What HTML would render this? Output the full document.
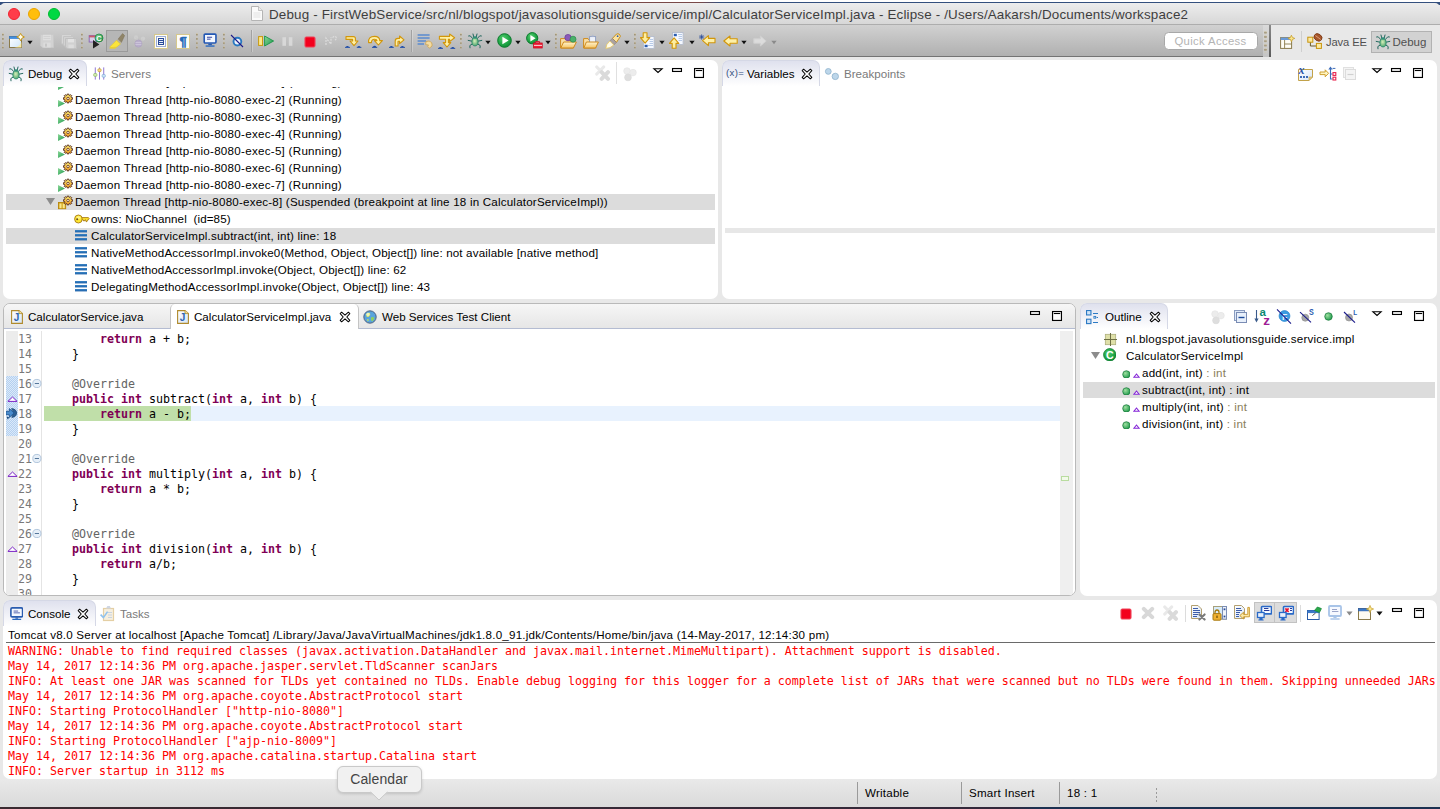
<!DOCTYPE html>
<html>
<head>
<meta charset="utf-8">
<title>Debug - Eclipse</title>
<style>
*{box-sizing:border-box;margin:0;padding:0}
html,body{width:1440px;height:809px;overflow:hidden}
body{background:#e8e8e8;font-family:"Liberation Sans",sans-serif;font-size:11px;color:#000;position:relative}
.abs{position:absolute}
#titlebar{left:0;top:3px;width:1440px;height:22px;background:linear-gradient(#ededed,#d7d7d7);border-bottom:1px solid #adadad;border-radius:5px 5px 0 0}
#title{left:269px;top:7px;font-size:13.4px;letter-spacing:0.165px;line-height:16px;color:#3e3e3e;white-space:nowrap}
.tl{width:12px;height:12px;border-radius:50%;top:8px}
#toolbar{left:0;top:25px;width:1262.5px;height:32px;background:linear-gradient(#d1d1d1,#b0b0b0);border-bottom:1px solid #737373}
#persp{left:1270px;top:25px;width:170px;height:32px;background:#e8e8e8}
.panel{background:#fff;border-radius:7px}
.tabtxt{top:0;height:26px;line-height:27px;white-space:nowrap;font-size:11.6px;letter-spacing:0}
.atab{background:linear-gradient(#dfe1ee,#fff);border:1px solid #d5d8e6;border-bottom:none;border-radius:7px 7px 0 0;height:26px;top:0}
.gray{color:#7a7a7a}
.row{left:0;height:17px;line-height:15px;white-space:nowrap;font-size:11.6px;letter-spacing:0.22px}
.mono{font-family:"DejaVu Sans Mono","Liberation Mono",monospace;font-size:11.63px;white-space:pre}
.cl{left:0;height:15px;line-height:15px}
.kw{color:#7f0055;font-weight:bold}
.an{color:#646464}
.ln{color:#787878}
.red{color:#ff0000}
</style>
</head>
<body>
<svg width="0" height="0" style="position:absolute"><defs>
<radialGradient id="gBug" cx="0.45" cy="0.4" r="0.7"><stop offset="0" stop-color="#d6efb8"/><stop offset="1" stop-color="#3a9a66"/></radialGradient>
<linearGradient id="gGear" x1="0" y1="0" x2="0" y2="1"><stop offset="0" stop-color="#fdf27a"/><stop offset="1" stop-color="#f59a1c"/></linearGradient>
<linearGradient id="gYel" x1="0" y1="0" x2="0" y2="1"><stop offset="0" stop-color="#fff3a0"/><stop offset="1" stop-color="#e9a820"/></linearGradient>
<linearGradient id="gBlue" x1="0" y1="0" x2="0" y2="1"><stop offset="0" stop-color="#3d86c6"/><stop offset="1" stop-color="#1a5fa8"/></linearGradient>
<linearGradient id="gGreen" x1="0" y1="0" x2="1" y2="1"><stop offset="0" stop-color="#8fd99a"/><stop offset="1" stop-color="#18964a"/></linearGradient>
<radialGradient id="gDot" cx="0.35" cy="0.35" r="0.7"><stop offset="0" stop-color="#9fe0a0"/><stop offset="1" stop-color="#1f9a4c"/></radialGradient>
<linearGradient id="gPage" x1="0" y1="0" x2="1" y2="1"><stop offset="0" stop-color="#ffffff"/><stop offset="1" stop-color="#d5e4f7"/></linearGradient>
<linearGradient id="gFolder" x1="0" y1="0" x2="0" y2="1"><stop offset="0" stop-color="#fff4d0"/><stop offset="1" stop-color="#f5c463"/></linearGradient>
<linearGradient id="gWin" x1="0" y1="0" x2="1" y2="1"><stop offset="0" stop-color="#ffffff"/><stop offset="1" stop-color="#cfe6fa"/></linearGradient>
<radialGradient id="gRun" cx="0.4" cy="0.35" r="0.75"><stop offset="0" stop-color="#52cc6c"/><stop offset="0.6" stop-color="#1fa546"/><stop offset="1" stop-color="#0a8430"/></radialGradient>
<linearGradient id="gRed" x1="0" y1="0" x2="0" y2="1"><stop offset="0" stop-color="#ff4a5a"/><stop offset="1" stop-color="#e8001c"/></linearGradient>
</defs></svg>
<!-- TITLE BAR -->
<div class="abs" style="left:0;top:0;width:1440px;height:5px;background:linear-gradient(#fff 0 1.7px,transparent 1.7px),linear-gradient(90deg,#34507e 0,#34507e 420px,#7a4a48 430px,#7a4a48 700px,#34507e 720px)"></div>
<div id="titlebar" class="abs"></div>
<div class="abs tl" style="left:8px;background:#ff3d49;border:1px solid #f2232f"></div>
<div class="abs tl" style="left:28px;background:#ffbe0b;border:1px solid #eaa400"></div>
<div class="abs tl" style="left:48px;background:#00d843;border:1px solid #00bb30"></div>
<div id="title" class="abs">Debug - FirstWebService/src/nl/blogspot/javasolutionsguide/service/impl/CalculatorServiceImpl.java - Eclipse - /Users/Aakarsh/Documents/workspace2</div>
<!-- TOOLBAR -->
<div id="toolbar" class="abs"></div>
<div id="persp" class="abs"></div>
<svg class="abs" style="left:251px;top:6px" width="12" height="15" viewBox="0 0 12 15"><path d="M0.5 0.5 H7.5 L11.5 4.5 V14.5 H0.5 Z" fill="#fafafa" stroke="#b4b4b4" stroke-width="1"/><path d="M7.5 0.5 V4.5 H11.5" fill="#ececec" stroke="#b4b4b4" stroke-width="0.8"/><path d="M2.4 7 H9.4 M2.4 9 H9.4 M2.4 11 H9.4" stroke="#dcdcdc" stroke-width="0.8"/></svg>
<div class="abs" style="left:2px;top:33.2px;width:2.4px;height:17.2px;background:radial-gradient(circle at 1.1px 1.6px,#9c9178 0.6px,rgba(214,204,176,0.85) 1.3px,transparent 1.6px);background-size:2.4px 4.3px"></div>
<svg class="abs" style="left:8px;top:33px" width="17" height="16" viewBox="0 0 17 16"><rect x="1.5" y="3.5" width="12" height="11" fill="url(#gWin)" stroke="#8a7a4a" stroke-width="1"/><path d="M13.4 9 Q12 14 6 14.4 H13.4 Z" fill="#fbeaa0" opacity="0.9"/><rect x="1.5" y="3.5" width="12" height="2.2" fill="#3f8fe4" stroke="#2f76cc" stroke-width="0.5"/><path d="M12.6 0.4 L13.9 2.7 L16.4 4 L13.9 5.3 L12.6 7.8 L11.3 5.3 L8.8 4 L11.3 2.7 Z" fill="#fffbe6" stroke="#c8981c" stroke-width="1"/></svg>
<svg class="abs" style="left:27px;top:39.7px" width="6" height="5" viewBox="0 0 7 5"><path d="M0.4 0.6 H6.6 L3.5 4.4 Z" fill="#111"/></svg>
<svg class="abs" style="left:40px;top:34px" width="14" height="14" viewBox="0 0 14 14"><path d="M0.5 0.5 H13.5 V13.5 H2.5 L0.5 11.5 Z" fill="#d2d2d2" stroke="#c9c9c9" stroke-width="1"/><rect x="3" y="0.8" width="8" height="5.4" fill="#dedede"/><path d="M3.6 2.5 H10.4 M3.6 4.5 H10.4" stroke="#cfcfcf" stroke-width="0.8"/><rect x="3.4" y="8.6" width="7.2" height="4.9" fill="#dcdcdc"/><rect x="5" y="9.6" width="2" height="3" fill="#c6c6c6"/></svg>
<svg class="abs" style="left:61px;top:34px" width="16" height="15" viewBox="0 0 16 15"><path d="M0.5 0.5 H10.5 V10.5 H2 L0.5 9 Z" fill="#d6d6d6" stroke="#c6c6c6" stroke-width="1"/><path d="M2.5 2.5 H12.5 V12.5 H4 L2.5 11 Z" fill="#d2d2d2" stroke="#c4c4c4" stroke-width="1"/><path d="M4.5 4.5 H15.5 V14.5 H6 L4.5 13 Z" fill="#d0d0d0" stroke="#c0c0c0" stroke-width="1"/><rect x="7" y="5" width="6" height="3.4" fill="#e2e2e2"/><rect x="7.4" y="10.6" width="5.4" height="3.6" fill="#dcdcdc"/></svg>
<div class="abs" style="left:81px;top:33.2px;width:2.4px;height:17.2px;background:radial-gradient(circle at 1.1px 1.6px,#9c9178 0.6px,rgba(214,204,176,0.85) 1.3px,transparent 1.6px);background-size:2.4px 4.3px"></div>
<svg class="abs" style="left:88px;top:33px" width="16" height="16" viewBox="0 0 16 16"><rect x="1.2" y="2.6" width="7" height="6.4" fill="#d8cde8" stroke="#8a6ab4" stroke-width="1"/><rect x="1.2" y="2.6" width="7" height="1.8" fill="#c85a6a"/><path d="M5 7 L11.4 11.4 L5 15.6 Z" fill="#222"/><circle cx="11" cy="5" r="4" fill="url(#gGreen)" stroke="#147a3a" stroke-width="0.7"/><text x="11" y="7.6" text-anchor="middle" font-family="Liberation Sans, sans-serif" font-weight="bold" font-size="7.4" fill="#fff">C</text></svg>
<div class="abs" style="left:106px;top:30px;width:22px;height:22px;background:#b6b6b6;border:1px solid #9a9a9a"></div>
<svg class="abs" style="left:109px;top:33px" width="16" height="16" viewBox="0 0 16 16"><path d="M9 6.2 L13.6 0.6 L15.6 2.6 L12.4 9.4 Z" fill="#8f8468" stroke="#7a6e52" stroke-width="0.5"/><path d="M7.4 7.4 L9 6.2 L12.4 9.4 L11.4 11 Z" fill="#b8b09a"/><path d="M7.4 7.4 L11.4 11 L7.4 14.2 L1.6 14.6 L1.2 13.6 Z" fill="#fbe43c" stroke="#e8cc1e" stroke-width="0.6"/><path d="M0.6 15 H6.6" stroke="#f2d420" stroke-width="1.2"/></svg>
<svg class="abs" style="left:132px;top:33px" width="15" height="16" viewBox="0 0 15 16"><circle cx="4" cy="4.4" r="2.1" fill="#cecece"/><circle cx="11" cy="5.6" r="2.1" fill="#cecece"/><path d="M4 4.4 L7 9 L11 5.6" fill="none" stroke="#cacaca" stroke-width="1"/><ellipse cx="6.4" cy="10.6" rx="3.5" ry="3.6" fill="#b9aecb" stroke="#ada2bf" stroke-width="0.7"/><path d="M3.4 9.5 H9.4 M3.4 11.5 H9.4" stroke="#cfc8dc" stroke-width="0.8"/></svg>
<svg class="abs" style="left:154px;top:34px" width="14" height="15" viewBox="0 0 14 15"><rect x="0.5" y="0.5" width="13" height="14" fill="#fdfdf8" stroke="#d6c88c" stroke-width="1"/><rect x="2.5" y="2.5" width="9" height="10" fill="none" stroke="#3a5ab0" stroke-width="1" stroke-dasharray="1 1"/><rect x="4.5" y="4.5" width="5" height="6" fill="#e8eefa" stroke="#2a4c9a" stroke-width="1"/><path d="M5 6.5 H9 M5 8.5 H9" stroke="#2a4c9a" stroke-width="1"/></svg>
<svg class="abs" style="left:176px;top:34px" width="14" height="15" viewBox="0 0 14 15"><rect x="0.5" y="0.5" width="13" height="14" fill="#fdfdf8" stroke="#d6c88c" stroke-width="1"/><text x="7" y="12" text-anchor="middle" font-family="Liberation Sans, sans-serif" font-weight="bold" font-size="13" fill="#246ab8" stroke="#246ab8" stroke-width="0.5">¶</text></svg>
<div class="abs" style="left:196px;top:33.2px;width:2.4px;height:17.2px;background:radial-gradient(circle at 1.1px 1.6px,#9c9178 0.6px,rgba(214,204,176,0.85) 1.3px,transparent 1.6px);background-size:2.4px 4.3px"></div>
<svg class="abs" style="left:203.4px;top:33.2px" width="14.2" height="14.2" viewBox="0 0 15 15"><rect x="1.3" y="1.2" width="12.4" height="9.4" rx="1" fill="#f4f8ff" stroke="#2458b4" stroke-width="1.7"/><path d="M4.2 4.5 H9.6 M4.2 6.5 H8" stroke="#2a3c9a" stroke-width="1"/><path d="M5.6 11.2 H9.4 V12.8 H5.6 Z" fill="#2a5cb0"/><path d="M2.8 13.8 H12.2" stroke="#2a6ac0" stroke-width="1.5"/></svg>
<div class="abs" style="left:223px;top:33.2px;width:2.4px;height:17.2px;background:radial-gradient(circle at 1.1px 1.6px,#9c9178 0.6px,rgba(214,204,176,0.85) 1.3px,transparent 1.6px);background-size:2.4px 4.3px"></div>
<svg class="abs" style="left:230px;top:34px" width="14" height="14" viewBox="0 0 14 14"><circle cx="7.4" cy="7.6" r="3.9" fill="#eef3fa" stroke="#2a78c0" stroke-width="1.9"/><path d="M1 1 L13 13" stroke="#1a1a8a" stroke-width="1.1"/></svg>
<div class="abs" style="left:251px;top:30px;width:1px;height:22px;background:#a2a2a2;box-shadow:1px 0 0 rgba(255,255,255,0.25)"></div>
<svg class="abs" style="left:257.6px;top:35px" width="17" height="12" viewBox="0 0 17 12"><rect x="0.6" y="1.6" width="3.9" height="8.8" fill="#fde98a" stroke="#c89a10" stroke-width="1"/><path d="M6.6 1 L15.6 6 L6.6 11 Z" fill="url(#gGreen)" stroke="#1a9446" stroke-width="0.9" stroke-linejoin="round"/></svg>
<svg class="abs" style="left:282px;top:37px" width="11" height="9" viewBox="0 0 11 9"><rect x="0.4" y="0.2" width="3.6" height="8.6" fill="#d8d8d8"/><rect x="6.8" y="0.2" width="3.6" height="8.6" fill="#d8d8d8"/></svg>
<svg class="abs" style="left:303.5px;top:35.5px" width="12" height="12" viewBox="0 0 12 12"><rect x="1" y="1" width="10" height="10" rx="1.4" fill="#f3001d" stroke="#ee4358" stroke-width="1.1"/></svg>
<svg class="abs" style="left:324px;top:34px" width="14" height="14" viewBox="0 0 14 14"><path d="M2 11 L2 4 L7 10 L7 3 M8.6 3.6 Q10 1.6 12 3 Q13 5 11 6" fill="none" stroke="#dcdcdc" stroke-width="1.2" stroke-dasharray="2 1"/></svg>
<svg class="abs" style="left:345px;top:35px" width="17" height="13" viewBox="0 0 17 13"><path d="M1 1.6 H8.4 Q10.4 1.6 10.4 3.6 V6 H13 L9 10.6 L5 6 H7.6 V4.4 H1 Z" fill="#fdf0a6" stroke="#d2960a" stroke-width="1.1" stroke-linejoin="round"/><path d="M0.6 12.2 Q2.4 9.6 4.2 12.2 Z M12.2 12.2 Q14 9.6 15.8 12.2 Z" fill="#1c4ca8"/><path d="M0 12.4 H5 M11.8 12.4 H16.4" stroke="#1c4ca8" stroke-width="0.9"/></svg>
<svg class="abs" style="left:367px;top:35px" width="17" height="13" viewBox="0 0 17 13"><path d="M1.6 7.6 Q1 1.4 7.6 1.4 Q12.6 1.4 12.8 5.6 H15.4 L11.4 10 L7.4 5.6 H10 Q9.8 4.2 7.6 4.2 Q4.4 4.2 4.4 7.6 Z" fill="#fdf0a6" stroke="#d2960a" stroke-width="1.1" stroke-linejoin="round"/><path d="M5.6 12.2 Q7.6 9.4 9.6 12.2 Z" fill="#1c4ca8"/><path d="M5 12.4 H10.2" stroke="#1c4ca8" stroke-width="0.9"/></svg>
<svg class="abs" style="left:389px;top:35px" width="17" height="13" viewBox="0 0 17 13"><path d="M6.2 11 V6 Q6.2 3.4 9 3.4 H10.6 V1 L15 4.8 L10.6 8.6 V6.2 H9.4 Q9 6.2 9 6.8 V11 Z" fill="#fdf0a6" stroke="#d2960a" stroke-width="1.1" stroke-linejoin="round"/><path d="M0.6 12.2 Q2.4 9.6 4.2 12.2 Z M11.6 12.2 Q13.4 9.6 15.2 12.2 Z" fill="#1c4ca8"/><path d="M0 12.4 H4.8 M11 12.4 H16" stroke="#1c4ca8" stroke-width="0.9"/></svg>
<div class="abs" style="left:411px;top:30px;width:1px;height:22px;background:#a2a2a2;box-shadow:1px 0 0 rgba(255,255,255,0.25)"></div>
<svg class="abs" style="left:417px;top:33px" width="16" height="16" viewBox="0 0 16 16"><path d="M0.6 2 H12.6 M0.6 5 H12.6 M0.6 8 H9 M0.6 11 H7" stroke="#5a8ad0" stroke-width="1.6"/><path d="M9 8.6 L12 8 Q15.6 9 15 13 L12.6 15 L10.4 13.4 L11.6 12 L8.6 11.6 Z" fill="#f4dca0" stroke="#d0a85a" stroke-width="0.9" stroke-linejoin="round"/></svg>
<svg class="abs" style="left:438px;top:33px" width="18" height="16" viewBox="0 0 18 16"><path d="M1.4 3.4 H11.6 V1 L16.6 4.8 L11.6 8.6 V6.2 H10.4 V9.6 H12.8 L9 14 L5.2 9.6 H7.6 V6.2 H1.4 Z" fill="#fdf0a6" stroke="#d2960a" stroke-width="1.1" stroke-linejoin="round"/><path d="M0.6 15.2 Q2.4 12.6 4.2 15.2 Z M13 15.2 Q14.8 12.6 16.6 15.2 Z" fill="#1c4ca8"/><path d="M0 15.4 H5 M12.4 15.4 H17.2" stroke="#1c4ca8" stroke-width="0.9"/></svg>
<div class="abs" style="left:460px;top:33.2px;width:2.4px;height:17.2px;background:radial-gradient(circle at 1.1px 1.6px,#9c9178 0.6px,rgba(214,204,176,0.85) 1.3px,transparent 1.6px);background-size:2.4px 4.3px"></div>
<svg class="abs" style="left:467px;top:33px" width="16" height="16" viewBox="0 0 16 16"><g stroke="#1a6258" stroke-width="0.95" fill="none" stroke-linecap="round"><path d="M5.8 5.6 L3.2 2.8 L1.6 3 M10.2 5.6 L12.8 2.8 L14.4 3 M5 8.2 L1.2 7.4 M11 8.2 L14.8 7.4 M5.4 10.8 L2.8 12.6 L3 14.8 M10.6 10.8 L13.2 12.6 L13 14.8 M6.8 4.2 L6 1 M9.2 4.2 L10 1"/></g><ellipse cx="8" cy="8.8" rx="3.1" ry="4.1" fill="url(#gBug)" stroke="#2a8a6a" stroke-width="0.9"/><ellipse cx="8" cy="4.4" rx="1.7" ry="1.2" fill="#2f8f78"/></svg>
<svg class="abs" style="left:485px;top:39.7px" width="6" height="5" viewBox="0 0 7 5"><path d="M0.4 0.6 H6.6 L3.5 4.4 Z" fill="#111"/></svg>
<svg class="abs" style="left:497px;top:33px" width="15" height="15" viewBox="0 0 15 15"><circle cx="7.5" cy="7.5" r="6.8" fill="url(#gRun)" stroke="#0a7a2c" stroke-width="1"/><path d="M5.4 3.7 L11.6 7.5 L5.4 11.3 Z" fill="#fff"/></svg>
<svg class="abs" style="left:515px;top:39.7px" width="6" height="5" viewBox="0 0 7 5"><path d="M0.4 0.6 H6.6 L3.5 4.4 Z" fill="#111"/></svg>
<svg class="abs" style="left:526px;top:32px" width="17" height="17" viewBox="0 0 17 17"><circle cx="6.2" cy="6.2" r="5.6" fill="url(#gRun)" stroke="#0a7a2c" stroke-width="1"/><path d="M4.4 3 L9.6 6.2 L4.4 9.4 Z" fill="#fff"/><path d="M9.6 9.6 H13.6 V11 H9.6 Z" fill="#fff" stroke="#d0102a" stroke-width="1"/><rect x="7.6" y="11" width="8.6" height="5" fill="#ee2038" stroke="#c80a20" stroke-width="0.8"/><path d="M8 13.4 H16" stroke="#fff" stroke-width="0.8"/></svg>
<svg class="abs" style="left:545px;top:39.7px" width="6" height="5" viewBox="0 0 7 5"><path d="M0.4 0.6 H6.6 L3.5 4.4 Z" fill="#111"/></svg>
<div class="abs" style="left:555px;top:33.2px;width:2.4px;height:17.2px;background:radial-gradient(circle at 1.1px 1.6px,#9c9178 0.6px,rgba(214,204,176,0.85) 1.3px,transparent 1.6px);background-size:2.4px 4.3px"></div>
<svg class="abs" style="left:560px;top:34px" width="17" height="15" viewBox="0 0 17 15"><path d="M0.6 4.6 H5.6 L7 6.4 H13.4 V14 H0.6 Z" fill="#f8dfa8" stroke="#cf8a1c" stroke-width="1"/><path d="M0.8 14 L3.6 8 H16.4 L13.4 14 Z" fill="url(#gFolder)" stroke="#cf8a1c" stroke-width="1" stroke-linejoin="round"/><circle cx="8" cy="3.6" r="3.2" fill="#8a5ab8" stroke="#6a3a9a" stroke-width="0.7"/><circle cx="13" cy="5.2" r="3" fill="#4ab06a" stroke="#2a8a4a" stroke-width="0.7"/></svg>
<svg class="abs" style="left:583px;top:34px" width="16" height="15" viewBox="0 0 16 15"><path d="M0.6 4.6 H5 L6.4 6.4 H12.6 V14 H0.6 Z" fill="#f8dfa8" stroke="#cf8a1c" stroke-width="1"/><rect x="6.6" y="2.6" width="6" height="6" fill="#eef2fa" stroke="#8a9cc0" stroke-width="0.9"/><path d="M8.4 2.6 L9 0.8 H10.4 L11 2.6 Z" fill="#b4bcd0"/><path d="M0.8 14 L3.4 8 H15.4 L12.6 14 Z" fill="url(#gFolder)" stroke="#cf8a1c" stroke-width="1" stroke-linejoin="round"/></svg>
<svg class="abs" style="left:605px;top:33px" width="16" height="16" viewBox="0 0 16 16"><path d="M7.4 5.4 L11.6 1 Q14.6 0 15.4 3.4 L11.4 9.4 Z" fill="#fbe2a0" stroke="#c8901c" stroke-width="1" stroke-linejoin="round"/><circle cx="12.6" cy="3.2" r="0.9" fill="#2a5cb0"/><path d="M4.8 8 L7.4 5.4 L11.4 9.4 L8.8 12 Z" fill="#aaa2a2" stroke="#8a7e78" stroke-width="0.6"/><path d="M4.8 8 L8.8 12 L5 14.6 L0.8 15.4 L1.8 11.6 Z" fill="#fffbe8" stroke="#e8c860" stroke-width="0.8"/></svg>
<svg class="abs" style="left:624px;top:39.7px" width="6" height="5" viewBox="0 0 7 5"><path d="M0.4 0.6 H6.6 L3.5 4.4 Z" fill="#111"/></svg>
<div class="abs" style="left:634px;top:33.2px;width:2.4px;height:17.2px;background:radial-gradient(circle at 1.1px 1.6px,#9c9178 0.6px,rgba(214,204,176,0.85) 1.3px,transparent 1.6px);background-size:2.4px 4.3px"></div>
<svg class="abs" style="left:640px;top:32px" width="15" height="17" viewBox="0 0 15 17"><rect x="3.5" y="4.5" width="10.6" height="12" fill="#f4f8ff" stroke="#b4bccc" stroke-width="0.9"/><path d="M9.6 7.5 H13 M9.6 9.5 H13 M9.6 11.5 H13 M8 13.5 H13" stroke="#b0c4e4" stroke-width="0.9"/><rect x="4.6" y="12.8" width="3" height="2.4" fill="#2a5cb0"/><path d="M3.2 0.8 H7 V5.6 H9.8 L5.1 11.2 L0.4 5.6 H3.2 Z" fill="#fdeea0" stroke="#d2960a" stroke-width="1.1" stroke-linejoin="round"/></svg>
<svg class="abs" style="left:659px;top:39.7px" width="6" height="5" viewBox="0 0 7 5"><path d="M0.4 0.6 H6.6 L3.5 4.4 Z" fill="#111"/></svg>
<svg class="abs" style="left:669px;top:32px" width="15" height="17" viewBox="0 0 15 17"><rect x="3.5" y="0.5" width="10.6" height="12" fill="#f4f8ff" stroke="#b4bccc" stroke-width="0.9"/><rect x="4.8" y="1.8" width="3" height="2.4" fill="#2a5cb0"/><path d="M9 2.5 H13 M9.6 4.5 H13 M9.6 6.5 H13 M9.6 8.5 H13" stroke="#b0c4e4" stroke-width="0.9"/><path d="M3.2 16.2 H7 V11.4 H9.8 L5.1 5.8 L0.4 11.4 H3.2 Z" fill="#fdeea0" stroke="#d2960a" stroke-width="1.1" stroke-linejoin="round"/></svg>
<svg class="abs" style="left:689px;top:39.7px" width="6" height="5" viewBox="0 0 7 5"><path d="M0.4 0.6 H6.6 L3.5 4.4 Z" fill="#111"/></svg>
<svg class="abs" style="left:699px;top:34px" width="17" height="13" viewBox="0 0 17 13"><path d="M16 4.4 H9.4 V1.6 L3.6 6.6 L9.4 11.6 V8.8 H16 Z" fill="#fdf0a8" stroke="#d2960a" stroke-width="1.1" stroke-linejoin="round"/><path d="M2.6 0.4 V5.6 M0 3 H5.2 M0.8 1.2 L4.4 4.8 M4.4 1.2 L0.8 4.8" stroke="#2a4c9a" stroke-width="0.8"/></svg>
<svg class="abs" style="left:723px;top:35px" width="15" height="12" viewBox="0 0 15 12"><path d="M14.2 3.8 H7 V1 L0.8 6 L7 11 V8.2 H14.2 Z" fill="#fdf0a8" stroke="#d2960a" stroke-width="1.1" stroke-linejoin="round"/></svg>
<svg class="abs" style="left:741px;top:39.7px" width="6" height="5" viewBox="0 0 7 5"><path d="M0.4 0.6 H6.6 L3.5 4.4 Z" fill="#111"/></svg>
<svg class="abs" style="left:753px;top:35px" width="14" height="12" viewBox="0 0 14 12"><path d="M0.8 3.8 H7.4 V1 L13.2 6 L7.4 11 V8.2 H0.8 Z" fill="#dcdcdc" stroke="#d0d0d0" stroke-width="1" stroke-linejoin="round"/></svg>
<svg class="abs" style="left:771px;top:39.7px" width="6" height="5" viewBox="0 0 7 5"><path d="M0.4 0.6 H6.6 L3.5 4.4 Z" fill="#8a8a8a"/></svg>
<div class="abs" style="left:1163.5px;top:31.5px;width:94px;height:18px;background:#fff;border:1px solid #a8a8a8;border-radius:4.5px;color:#b4b4b4;font-size:11.3px;line-height:16px;text-align:center;letter-spacing:0.36px">Quick Access</div>
<div class="abs" style="left:1262.5px;top:25px;width:6px;height:32px;background:linear-gradient(#dadada,#c4c4c4)"></div>
<div class="abs" style="left:1264.3px;top:31.2px;width:2.4px;height:21.5px;background:radial-gradient(circle at 1.1px 1.6px,#9c9178 0.6px,rgba(214,204,176,0.85) 1.3px,transparent 1.6px);background-size:2.4px 4.3px"></div>
<div class="abs" style="left:1268.5px;top:25px;width:2px;height:32px;background:linear-gradient(#8a8a8a,#5a5a5a)"></div>
<svg class="abs" style="left:1280px;top:35.3px" width="15" height="14" viewBox="0 0 15 14"><rect x="0.6" y="2.6" width="11" height="10.8" fill="#fffdf4" stroke="#8a7a4a" stroke-width="1"/><rect x="0.6" y="2.6" width="11" height="2.4" fill="#6a9ad8"/><path d="M4.6 5 V13.4 M4.6 9 H11.6" stroke="#8a7a4a" stroke-width="0.9"/><path d="M11.4 0.2 L12.4 2.4 L14.8 3.4 L12.4 4.4 L11.4 6.8 L10.4 4.4 L8 3.4 L10.4 2.4 Z" fill="#fbe68a" stroke="#c8a030" stroke-width="0.8"/></svg>
<div class="abs" style="left:1301px;top:31px;width:1px;height:21px;background:#cfcfcf"></div>
<svg class="abs" style="left:1307px;top:33px" width="16" height="16" viewBox="0 0 16 16"><path d="M3.4 8 V13 H10" fill="none" stroke="#6a5a2a" stroke-width="1"/><rect x="0.8" y="4.2" width="5" height="5" fill="#fbe9a0" stroke="#c8940c" stroke-width="1"/><rect x="9.4" y="10.4" width="5" height="5" fill="#fbe9a0" stroke="#c8940c" stroke-width="1"/><ellipse cx="11" cy="4.4" rx="4.2" ry="3.4" transform="rotate(35 11 4.4)" fill="#a8562a" stroke="#7a3a18" stroke-width="0.8"/><path d="M8.4 2.6 Q11 4.4 13.6 6.4" stroke="#e8b08a" stroke-width="0.8" fill="none"/></svg>
<div class="abs" style="left:1326px;top:34px;letter-spacing:-0.1px;font-size:11.2px;line-height:16px;color:#505050;white-space:nowrap">Java EE</div>
<div class="abs" style="left:1371px;top:31px;width:61px;height:22px;background:#d2d2d2;border:1px solid #b2b2b2"></div>
<svg class="abs" style="left:1375px;top:34px" width="16" height="16" viewBox="0 0 16 16"><g stroke="#1a6258" stroke-width="0.95" fill="none" stroke-linecap="round"><path d="M5.8 5.6 L3.2 2.8 L1.6 3 M10.2 5.6 L12.8 2.8 L14.4 3 M5 8.2 L1.2 7.4 M11 8.2 L14.8 7.4 M5.4 10.8 L2.8 12.6 L3 14.8 M10.6 10.8 L13.2 12.6 L13 14.8 M6.8 4.2 L6 1 M9.2 4.2 L10 1"/></g><ellipse cx="8" cy="8.8" rx="3.1" ry="4.1" fill="url(#gBug)" stroke="#2a8a6a" stroke-width="0.9"/><ellipse cx="8" cy="4.4" rx="1.7" ry="1.2" fill="#2f8f78"/></svg>
<div class="abs" style="left:1392.5px;top:34px;font-size:11.5px;line-height:16px;color:#505050;white-space:nowrap">Debug</div>


<!-- DEBUG PANEL -->
<div id="debug" class="abs panel" style="left:3px;top:60px;width:715px;height:239px">
<div class="abs atab" style="left:0;width:84px"></div>
<svg class="abs" style="left:5px;top:6px" width="16" height="16" viewBox="0 0 16 16"><g stroke="#1a6258" stroke-width="0.95" fill="none" stroke-linecap="round"><path d="M5.8 5.6 L3.2 2.8 L1.6 3 M10.2 5.6 L12.8 2.8 L14.4 3 M5 8.2 L1.2 7.4 M11 8.2 L14.8 7.4 M5.4 10.8 L2.8 12.6 L3 14.8 M10.6 10.8 L13.2 12.6 L13 14.8 M6.8 4.2 L6 1 M9.2 4.2 L10 1"/></g><ellipse cx="8" cy="8.8" rx="3.1" ry="4.1" fill="url(#gBug)" stroke="#2a8a6a" stroke-width="0.9"/><ellipse cx="8" cy="4.4" rx="1.7" ry="1.2" fill="#2f8f78"/></svg>
<div class="abs tabtxt" style="left:25px">Debug</div>
<svg class="abs" style="left:65px;top:8px" width="12" height="12" viewBox="0 0 12 12"><path d="M1.2 2.6 L2.6 1.2 L6 4.2 L9.4 1.2 L10.8 2.6 L7.8 6 L10.8 9.4 L9.4 10.8 L6 7.8 L2.6 10.8 L1.2 9.4 L4.2 6 Z" fill="#fff" stroke="#000" stroke-width="1.05" stroke-linejoin="round"/></svg>
<svg class="abs" style="left:89px;top:6px" width="15" height="15" viewBox="0 0 16 16"><g stroke="#8a6fd0" stroke-width="1"><path d="M3.5 1.5 V14.5 M8 1.5 V14.5 M12.5 1.5 V14.5"/></g><rect x="1.8" y="8" width="3.4" height="3" rx="1" fill="#d8ecb0" stroke="#8ab86a" stroke-width="0.8"/><rect x="6.3" y="3" width="3.4" height="3" rx="1" fill="#f8dc88" stroke="#c8a040" stroke-width="0.8"/><rect x="10.8" y="9" width="3.4" height="3" rx="1" fill="#cfe6f8" stroke="#80acd8" stroke-width="0.8"/></svg>
<div class="abs tabtxt gray" style="left:108px">Servers</div>
<div class="abs" style="left:613px;top:2px;width:1px;height:22px;background:#e0e0e0"></div>
<svg class="abs" style="left:591px;top:5px" width="18" height="16" viewBox="0 0 18 16"><path d="M2.8 2 L9.6 9 M9.6 2 L2.8 9" stroke="#e9e9e9" stroke-width="3.2" stroke-linecap="round"/><path d="M7.6 7.2 L14 13.8 M14 7.2 L7.6 13.8" stroke="#dadada" stroke-width="4" stroke-linecap="round"/></svg>
<svg class="abs" style="left:619px;top:6px" width="16" height="16" viewBox="0 0 16 16"><circle cx="5" cy="5" r="3.3" fill="#ececec" stroke="#e2e2e2" stroke-width="0.6"/><circle cx="11" cy="6.6" r="3.3" fill="#ececec" stroke="#e2e2e2" stroke-width="0.6"/><circle cx="6" cy="11.4" r="3.4" fill="#dedede" stroke="#d8d8d8" stroke-width="0.6"/></svg>
<svg class="abs" style="left:649px;top:7px" width="12" height="8" viewBox="0 0 12 8"><path d="M1.8 1.65 L10.2 1.65 L6 5.45 Z" fill="#fff" stroke="#000" stroke-width="1.05" stroke-linejoin="miter"/></svg>
<svg class="abs" style="left:668px;top:7px" width="12" height="6" viewBox="0 0 12 6"><rect x="1.55" y="1.55" width="8.9" height="2.9" fill="#fff" stroke="#000" stroke-width="1.15"/></svg>
<svg class="abs" style="left:690px;top:7px" width="12" height="12" viewBox="0 0 12 12"><rect x="1.55" y="1.55" width="8.9" height="8.9" fill="#fff" stroke="#000" stroke-width="1.15"/><rect x="2.8" y="3" width="6.4" height="1.05" fill="#000"/></svg>
<div class="abs" style="left:0;top:27px;width:715px;height:212px;overflow:hidden;border-radius:0 0 7px 7px">
<div class="abs row" style="left:72px;top:-13px;letter-spacing:0.275px">Daemon Thread [http-nio-8080-exec-1] (Running)</div>
<svg class="abs" style="left:55px;top:-12px" width="16" height="16" viewBox="0 0 16 16"><path d="M0 8 L7 11.5 L0 15 Z" fill="url(#gGreen)"/><svg x="5" y="1.5" width="10" height="10" viewBox="0 0 10 10"><path d="M4.26 0.36 L5.74 0.36 L5.87 1.61 L6.78 1.99 L7.76 1.20 L8.80 2.24 L8.01 3.22 L8.39 4.13 L9.64 4.26 L9.64 5.74 L8.39 5.87 L8.01 6.78 L8.80 7.76 L7.76 8.80 L6.78 8.01 L5.87 8.39 L5.74 9.64 L4.26 9.64 L4.13 8.39 L3.22 8.01 L2.24 8.80 L1.20 7.76 L1.99 6.78 L1.61 5.87 L0.36 5.74 L0.36 4.26 L1.61 4.13 L1.99 3.22 L1.20 2.24 L2.24 1.20 L3.22 1.99 L4.13 1.61 Z" fill="url(#gGear)" stroke="#5a3427" stroke-width="1" stroke-linejoin="round"/><circle cx="5" cy="5" r="1.25" fill="#fff3d0" stroke="#6b4030" stroke-width="0.9"/></svg></svg>
<div class="abs row" style="left:72px;top:5px;letter-spacing:0.275px">Daemon Thread [http-nio-8080-exec-2] (Running)</div>
<svg class="abs" style="left:55px;top:5px" width="16" height="16" viewBox="0 0 16 16"><path d="M0 8 L7 11.5 L0 15 Z" fill="url(#gGreen)"/><svg x="5" y="1.5" width="10" height="10" viewBox="0 0 10 10"><path d="M4.26 0.36 L5.74 0.36 L5.87 1.61 L6.78 1.99 L7.76 1.20 L8.80 2.24 L8.01 3.22 L8.39 4.13 L9.64 4.26 L9.64 5.74 L8.39 5.87 L8.01 6.78 L8.80 7.76 L7.76 8.80 L6.78 8.01 L5.87 8.39 L5.74 9.64 L4.26 9.64 L4.13 8.39 L3.22 8.01 L2.24 8.80 L1.20 7.76 L1.99 6.78 L1.61 5.87 L0.36 5.74 L0.36 4.26 L1.61 4.13 L1.99 3.22 L1.20 2.24 L2.24 1.20 L3.22 1.99 L4.13 1.61 Z" fill="url(#gGear)" stroke="#5a3427" stroke-width="1" stroke-linejoin="round"/><circle cx="5" cy="5" r="1.25" fill="#fff3d0" stroke="#6b4030" stroke-width="0.9"/></svg></svg>
<div class="abs row" style="left:72px;top:22px;letter-spacing:0.275px">Daemon Thread [http-nio-8080-exec-3] (Running)</div>
<svg class="abs" style="left:55px;top:22px" width="16" height="16" viewBox="0 0 16 16"><path d="M0 8 L7 11.5 L0 15 Z" fill="url(#gGreen)"/><svg x="5" y="1.5" width="10" height="10" viewBox="0 0 10 10"><path d="M4.26 0.36 L5.74 0.36 L5.87 1.61 L6.78 1.99 L7.76 1.20 L8.80 2.24 L8.01 3.22 L8.39 4.13 L9.64 4.26 L9.64 5.74 L8.39 5.87 L8.01 6.78 L8.80 7.76 L7.76 8.80 L6.78 8.01 L5.87 8.39 L5.74 9.64 L4.26 9.64 L4.13 8.39 L3.22 8.01 L2.24 8.80 L1.20 7.76 L1.99 6.78 L1.61 5.87 L0.36 5.74 L0.36 4.26 L1.61 4.13 L1.99 3.22 L1.20 2.24 L2.24 1.20 L3.22 1.99 L4.13 1.61 Z" fill="url(#gGear)" stroke="#5a3427" stroke-width="1" stroke-linejoin="round"/><circle cx="5" cy="5" r="1.25" fill="#fff3d0" stroke="#6b4030" stroke-width="0.9"/></svg></svg>
<div class="abs row" style="left:72px;top:39px;letter-spacing:0.275px">Daemon Thread [http-nio-8080-exec-4] (Running)</div>
<svg class="abs" style="left:55px;top:39px" width="16" height="16" viewBox="0 0 16 16"><path d="M0 8 L7 11.5 L0 15 Z" fill="url(#gGreen)"/><svg x="5" y="1.5" width="10" height="10" viewBox="0 0 10 10"><path d="M4.26 0.36 L5.74 0.36 L5.87 1.61 L6.78 1.99 L7.76 1.20 L8.80 2.24 L8.01 3.22 L8.39 4.13 L9.64 4.26 L9.64 5.74 L8.39 5.87 L8.01 6.78 L8.80 7.76 L7.76 8.80 L6.78 8.01 L5.87 8.39 L5.74 9.64 L4.26 9.64 L4.13 8.39 L3.22 8.01 L2.24 8.80 L1.20 7.76 L1.99 6.78 L1.61 5.87 L0.36 5.74 L0.36 4.26 L1.61 4.13 L1.99 3.22 L1.20 2.24 L2.24 1.20 L3.22 1.99 L4.13 1.61 Z" fill="url(#gGear)" stroke="#5a3427" stroke-width="1" stroke-linejoin="round"/><circle cx="5" cy="5" r="1.25" fill="#fff3d0" stroke="#6b4030" stroke-width="0.9"/></svg></svg>
<div class="abs row" style="left:72px;top:56px;letter-spacing:0.275px">Daemon Thread [http-nio-8080-exec-5] (Running)</div>
<svg class="abs" style="left:55px;top:56px" width="16" height="16" viewBox="0 0 16 16"><path d="M0 8 L7 11.5 L0 15 Z" fill="url(#gGreen)"/><svg x="5" y="1.5" width="10" height="10" viewBox="0 0 10 10"><path d="M4.26 0.36 L5.74 0.36 L5.87 1.61 L6.78 1.99 L7.76 1.20 L8.80 2.24 L8.01 3.22 L8.39 4.13 L9.64 4.26 L9.64 5.74 L8.39 5.87 L8.01 6.78 L8.80 7.76 L7.76 8.80 L6.78 8.01 L5.87 8.39 L5.74 9.64 L4.26 9.64 L4.13 8.39 L3.22 8.01 L2.24 8.80 L1.20 7.76 L1.99 6.78 L1.61 5.87 L0.36 5.74 L0.36 4.26 L1.61 4.13 L1.99 3.22 L1.20 2.24 L2.24 1.20 L3.22 1.99 L4.13 1.61 Z" fill="url(#gGear)" stroke="#5a3427" stroke-width="1" stroke-linejoin="round"/><circle cx="5" cy="5" r="1.25" fill="#fff3d0" stroke="#6b4030" stroke-width="0.9"/></svg></svg>
<div class="abs row" style="left:72px;top:73px;letter-spacing:0.275px">Daemon Thread [http-nio-8080-exec-6] (Running)</div>
<svg class="abs" style="left:55px;top:73px" width="16" height="16" viewBox="0 0 16 16"><path d="M0 8 L7 11.5 L0 15 Z" fill="url(#gGreen)"/><svg x="5" y="1.5" width="10" height="10" viewBox="0 0 10 10"><path d="M4.26 0.36 L5.74 0.36 L5.87 1.61 L6.78 1.99 L7.76 1.20 L8.80 2.24 L8.01 3.22 L8.39 4.13 L9.64 4.26 L9.64 5.74 L8.39 5.87 L8.01 6.78 L8.80 7.76 L7.76 8.80 L6.78 8.01 L5.87 8.39 L5.74 9.64 L4.26 9.64 L4.13 8.39 L3.22 8.01 L2.24 8.80 L1.20 7.76 L1.99 6.78 L1.61 5.87 L0.36 5.74 L0.36 4.26 L1.61 4.13 L1.99 3.22 L1.20 2.24 L2.24 1.20 L3.22 1.99 L4.13 1.61 Z" fill="url(#gGear)" stroke="#5a3427" stroke-width="1" stroke-linejoin="round"/><circle cx="5" cy="5" r="1.25" fill="#fff3d0" stroke="#6b4030" stroke-width="0.9"/></svg></svg>
<div class="abs row" style="left:72px;top:90px;letter-spacing:0.275px">Daemon Thread [http-nio-8080-exec-7] (Running)</div>
<svg class="abs" style="left:55px;top:90px" width="16" height="16" viewBox="0 0 16 16"><path d="M0 8 L7 11.5 L0 15 Z" fill="url(#gGreen)"/><svg x="5" y="1.5" width="10" height="10" viewBox="0 0 10 10"><path d="M4.26 0.36 L5.74 0.36 L5.87 1.61 L6.78 1.99 L7.76 1.20 L8.80 2.24 L8.01 3.22 L8.39 4.13 L9.64 4.26 L9.64 5.74 L8.39 5.87 L8.01 6.78 L8.80 7.76 L7.76 8.80 L6.78 8.01 L5.87 8.39 L5.74 9.64 L4.26 9.64 L4.13 8.39 L3.22 8.01 L2.24 8.80 L1.20 7.76 L1.99 6.78 L1.61 5.87 L0.36 5.74 L0.36 4.26 L1.61 4.13 L1.99 3.22 L1.20 2.24 L2.24 1.20 L3.22 1.99 L4.13 1.61 Z" fill="url(#gGear)" stroke="#5a3427" stroke-width="1" stroke-linejoin="round"/><circle cx="5" cy="5" r="1.25" fill="#fff3d0" stroke="#6b4030" stroke-width="0.9"/></svg></svg>
<div class="abs" style="left:3px;top:107px;width:709px;height:16px;background:#dcdcdc"></div>
<div class="abs row" style="left:72px;top:107px;letter-spacing:0.2px">Daemon Thread [http-nio-8080-exec-8] (Suspended (breakpoint at line 18 in CalculatorServiceImpl))</div>
<svg class="abs" style="left:43px;top:111px" width="10" height="8" viewBox="0 0 10 8"><path d="M0 0 L9 0 L4.5 7 Z" fill="#8c8c8c"/></svg>
<svg class="abs" style="left:55px;top:107px" width="16" height="16" viewBox="0 0 16 16"><rect x="0.5" y="8.5" width="7.2" height="6.2" fill="#c8960c" stroke="#b8860b" stroke-width="0.9"/><rect x="1.4" y="9.4" width="2.2" height="4.8" fill="#fbe88a"/><rect x="4.6" y="9.4" width="2.2" height="4.8" fill="#fbe88a"/><svg x="5" y="1.5" width="10" height="10" viewBox="0 0 10 10"><path d="M4.26 0.36 L5.74 0.36 L5.87 1.61 L6.78 1.99 L7.76 1.20 L8.80 2.24 L8.01 3.22 L8.39 4.13 L9.64 4.26 L9.64 5.74 L8.39 5.87 L8.01 6.78 L8.80 7.76 L7.76 8.80 L6.78 8.01 L5.87 8.39 L5.74 9.64 L4.26 9.64 L4.13 8.39 L3.22 8.01 L2.24 8.80 L1.20 7.76 L1.99 6.78 L1.61 5.87 L0.36 5.74 L0.36 4.26 L1.61 4.13 L1.99 3.22 L1.20 2.24 L2.24 1.20 L3.22 1.99 L4.13 1.61 Z" fill="url(#gGear)" stroke="#5a3427" stroke-width="1" stroke-linejoin="round"/><circle cx="5" cy="5" r="1.25" fill="#fff3d0" stroke="#6b4030" stroke-width="0.9"/></svg></svg>
<div class="abs row" style="left:88px;top:124px;letter-spacing:0.11px">owns: NioChannel&nbsp; (id=85)</div>
<svg class="abs" style="left:71px;top:124px" width="16" height="16" viewBox="0 0 16 16"><path d="M7 6.6 L14.4 6.6 L15.2 7.6 L14.4 8.8 L13.6 8.8 L13 10.6 L12 10.6 L11.6 8.8 L11 8.8 L10.4 10 L9.6 10 L9.2 8.8 L7 8.8 Z" fill="#ffe42c" stroke="#a87a14" stroke-width="0.9" stroke-linejoin="round"/><ellipse cx="4.4" cy="8" rx="3.8" ry="4" fill="#ffe830" stroke="#a87a14" stroke-width="0.9"/><ellipse cx="4.6" cy="6.6" rx="2.2" ry="1.4" fill="#fff8a0" opacity="0.8"/><circle cx="3.2" cy="8.2" r="1" fill="#6a4a28"/></svg>
<div class="abs" style="left:3px;top:141px;width:709px;height:16px;background:#dcdcdc"></div>
<div class="abs row" style="left:88px;top:141px;letter-spacing:0.18px">CalculatorServiceImpl.subtract(int, int) line: 18</div>
<svg class="abs" style="left:72px;top:141px" width="16" height="16" viewBox="0 0 16 16"><rect x="0" y="2" width="12" height="2.4" fill="url(#gBlue)"/><rect x="0" y="6" width="12" height="2.4" fill="url(#gBlue)"/><rect x="0" y="10" width="12" height="2.4" fill="url(#gBlue)"/></svg>
<div class="abs row" style="left:88px;top:158px;letter-spacing:0.16px">NativeMethodAccessorImpl.invoke0(Method, Object, Object[]) line: not available [native method]</div>
<svg class="abs" style="left:72px;top:158px" width="16" height="16" viewBox="0 0 16 16"><rect x="0" y="2" width="12" height="2.4" fill="url(#gBlue)"/><rect x="0" y="6" width="12" height="2.4" fill="url(#gBlue)"/><rect x="0" y="10" width="12" height="2.4" fill="url(#gBlue)"/></svg>
<div class="abs row" style="left:88px;top:175px;letter-spacing:0.16px">NativeMethodAccessorImpl.invoke(Object, Object[]) line: 62</div>
<svg class="abs" style="left:72px;top:175px" width="16" height="16" viewBox="0 0 16 16"><rect x="0" y="2" width="12" height="2.4" fill="url(#gBlue)"/><rect x="0" y="6" width="12" height="2.4" fill="url(#gBlue)"/><rect x="0" y="10" width="12" height="2.4" fill="url(#gBlue)"/></svg>
<div class="abs row" style="left:88px;top:192px;letter-spacing:0.17px">DelegatingMethodAccessorImpl.invoke(Object, Object[]) line: 43</div>
<svg class="abs" style="left:72px;top:192px" width="16" height="16" viewBox="0 0 16 16"><rect x="0" y="2" width="12" height="2.4" fill="url(#gBlue)"/><rect x="0" y="6" width="12" height="2.4" fill="url(#gBlue)"/><rect x="0" y="10" width="12" height="2.4" fill="url(#gBlue)"/></svg>
</div>

</div>
<!-- VARIABLES PANEL -->
<div id="vars" class="abs panel" style="left:722px;top:60px;width:715px;height:239px">
<div class="abs atab" style="left:0;width:98px"></div>
<div class="abs tabtxt" style="left:4px;top:-1px;font-size:9.6px;color:#34507e;letter-spacing:0.35px">(x)=</div>
<div class="abs tabtxt" style="left:25px;top:0px;">Variables</div>
<svg class="abs" style="left:79px;top:8px" width="12" height="12" viewBox="0 0 12 12"><path d="M1.2 2.6 L2.6 1.2 L6 4.2 L9.4 1.2 L10.8 2.6 L7.8 6 L10.8 9.4 L9.4 10.8 L6 7.8 L2.6 10.8 L1.2 9.4 L4.2 6 Z" fill="#fff" stroke="#000" stroke-width="1.05" stroke-linejoin="round"/></svg>
<svg class="abs" style="left:101px;top:6px" width="16" height="16" viewBox="0 0 16 16"><circle cx="5.3" cy="5.4" r="2.9" fill="#bcd6ea" stroke="#8fb2cc" stroke-width="0.8"/><circle cx="12.3" cy="10.4" r="3.2" fill="#bcd6ea" stroke="#8fb2cc" stroke-width="0.8"/></svg>
<div class="abs tabtxt gray" style="left:122px;top:0px;">Breakpoints</div>
<svg class="abs" style="left:574px;top:5px" width="18" height="16" viewBox="0 0 18 16"><path d="M2.5 4.5 H16.5 V12 L13 15.5 H2.5 Z" fill="url(#gPage)" stroke="#c2a24a" stroke-width="1"/><path d="M16.5 12 H13 V15.5 Z" fill="#e8cf80" stroke="#c2a24a" stroke-width="0.6"/><rect x="4" y="11" width="2" height="2" fill="#3d6cb8"/><rect x="7" y="11" width="2" height="2" fill="#3d6cb8"/><rect x="10" y="11" width="2" height="2" fill="#3d6cb8"/><text x="2.4" y="9.4" font-family="Liberation Serif, serif" font-style="italic" font-weight="bold" font-size="12" fill="#2c56a8">x</text></svg>
<svg class="abs" style="left:597px;top:5px" width="18" height="16" viewBox="0 0 18 16"><path d="M1 7 H6.2 V4.8 L9.6 8.3 L6.2 11.8 V9.6 H1 Z" fill="#fff4c0" stroke="#cfa030" stroke-width="1" stroke-linejoin="round"/><path d="M11.5 3 V14 H13.5 M11.5 9 H13.5" fill="none" stroke="#3d6cb8" stroke-width="1.1"/><path d="M9.3 4.6 L11.5 1.4 L13.7 4.6 Z" fill="#3d6cb8"/><path d="M13.6 3.4 H16.4" stroke="#3d6cb8" stroke-width="1"/><rect x="14" y="7.6" width="2.8" height="2.8" fill="#fff" stroke="#e8214c" stroke-width="1.1"/><rect x="14" y="12.2" width="2.8" height="2.8" fill="#fff" stroke="#e8214c" stroke-width="1.1"/></svg>
<svg class="abs" style="left:620px;top:6px" width="16" height="16" viewBox="0 0 16 16"><rect x="1.5" y="1.5" width="10" height="10" fill="#f4f4f4" stroke="#e0e0e0" stroke-width="1"/><rect x="3.5" y="3.5" width="10" height="10" fill="#f4f4f4" stroke="#dcdcdc" stroke-width="1"/><path d="M5.5 8.5 H11.5" stroke="#d0d0d0" stroke-width="1.2"/></svg>
<svg class="abs" style="left:649px;top:7px" width="12" height="8" viewBox="0 0 12 8"><path d="M1.8 1.65 L10.2 1.65 L6 5.45 Z" fill="#fff" stroke="#000" stroke-width="1.05" stroke-linejoin="miter"/></svg>
<svg class="abs" style="left:668px;top:7px" width="12" height="6" viewBox="0 0 12 6"><rect x="1.55" y="1.55" width="8.9" height="2.9" fill="#fff" stroke="#000" stroke-width="1.15"/></svg>
<svg class="abs" style="left:690px;top:7px" width="12" height="12" viewBox="0 0 12 12"><rect x="1.55" y="1.55" width="8.9" height="8.9" fill="#fff" stroke="#000" stroke-width="1.15"/><rect x="2.8" y="3" width="6.4" height="1.05" fill="#000"/></svg>
<div class="abs" style="left:3px;top:168px;width:710px;height:5px;background:#e7e7e7"></div>

</div>
<!-- EDITOR PANEL -->
<div id="editor" class="abs panel" style="left:3px;top:303px;width:1073px;height:293px;border:1px solid #b9b9b9">
<div class="abs" style="left:0px;top:0px;width:1071px;height:25px;background:linear-gradient(#f6f6f6,#e6e6e6);border-radius:6px 6px 0 0;border-bottom:1px solid #b4bcd2"></div>
<div class="abs" style="left:166px;top:0px;width:189px;height:25px;background:#fff;border-left:1px solid #c4c4c4;border-right:1px solid #c4c4c4;border-radius:5px 5px 0 0"></div>
<svg class="abs" style="left:7px;top:6px" width="12" height="14" viewBox="0 0 12 14"><path d="M0.6 0.6 H8 L11.4 3.6 V13.4 H0.6 Z" fill="url(#gPage)" stroke="#b08a2c" stroke-width="1.1"/><path d="M8 0.6 V3.6 H11.4" fill="#f4e2a4" stroke="#b08a2c" stroke-width="0.8"/><text x="5.6" y="11.2" text-anchor="middle" font-family="Liberation Sans, sans-serif" font-weight="bold" font-size="10" fill="#2c63b0">J</text></svg>
<div class="abs tabtxt" style="left:24px;top:0px;line-height:26px">CalculatorService.java</div>
<svg class="abs" style="left:173px;top:6px" width="12" height="14" viewBox="0 0 12 14"><path d="M0.6 0.6 H8 L11.4 3.6 V13.4 H0.6 Z" fill="url(#gPage)" stroke="#b08a2c" stroke-width="1.1"/><path d="M8 0.6 V3.6 H11.4" fill="#f4e2a4" stroke="#b08a2c" stroke-width="0.8"/><text x="5.6" y="11.2" text-anchor="middle" font-family="Liberation Sans, sans-serif" font-weight="bold" font-size="10" fill="#2c63b0">J</text></svg>
<div class="abs tabtxt" style="left:190px;top:0px;line-height:26px">CalculatorServiceImpl.java</div>
<svg class="abs" style="left:335px;top:7px" width="12" height="12" viewBox="0 0 12 12"><path d="M1.2 2.6 L2.6 1.2 L6 4.2 L9.4 1.2 L10.8 2.6 L7.8 6 L10.8 9.4 L9.4 10.8 L6 7.8 L2.6 10.8 L1.2 9.4 L4.2 6 Z" fill="#fff" stroke="#000" stroke-width="1.05" stroke-linejoin="round"/></svg>
<svg class="abs" style="left:359px;top:6px" width="14" height="14" viewBox="0 0 14 14"><circle cx="7" cy="7" r="6.2" fill="#5aa4dc" stroke="#4a5a78" stroke-width="0.9"/><path d="M3 4 Q5 2 7 3 Q8 5 6 6.4 Q4.4 7.4 3.6 6.4 Z" fill="#d8e86a"/><path d="M8 7.4 Q10.4 6.4 11.4 8 Q11 10.6 9 11.4 Q7.6 10 8 7.4 Z" fill="#8fcf60"/><path d="M4 9 Q5.4 8.6 6 10 Q5.4 11.6 4.4 11 Z" fill="#b8dc68"/><circle cx="5" cy="4.4" r="1.6" fill="#ffffff" opacity="0.55"/></svg>
<div class="abs tabtxt" style="left:378px;top:0px;line-height:26px">Web Services Test Client</div>
<svg class="abs" style="left:1025px;top:6px" width="12" height="6" viewBox="0 0 12 6"><rect x="1.55" y="1.55" width="8.9" height="2.9" fill="#fff" stroke="#000" stroke-width="1.15"/></svg>
<svg class="abs" style="left:1047px;top:6px" width="12" height="12" viewBox="0 0 12 12"><rect x="1.55" y="1.55" width="8.9" height="8.9" fill="#fff" stroke="#000" stroke-width="1.15"/><rect x="2.8" y="3" width="6.4" height="1.05" fill="#000"/></svg>
<div class="abs" style="left:0;top:25px;width:1071px;height:266px;overflow:hidden;border-radius:0 0 6px 6px;background:#fff">
<div class="abs" style="left:2px;top:2px;width:12px;height:266px;background:#ececec"></div>
<div class="abs" style="left:2px;top:47px;width:12px;height:60px;background:#c9def5;background-image:repeating-conic-gradient(#b4d0f0 0% 25%, #dbe9f9 0% 50%);background-size:2px 2px"></div>
<div class="abs" style="left:37px;top:2px;width:1px;height:266px;background:#e4e4e4"></div>
<div class="abs" style="left:1056px;top:2px;width:13px;height:266px;background:#efefef"></div>
<div class="abs" style="left:1057px;top:147px;width:8px;height:5px;border:1px solid #b9dca0;background:#f2faea"></div>
<div class="abs" style="left:40px;top:77px;width:1016px;height:15px;background:#e8f2fe"></div>
<div class="abs" style="left:40px;top:77px;width:147px;height:15px;background:#c0dfa9"></div>
<div class="abs mono cl ln" style="left:14px;top:3px;">13</div>
<div class="abs mono cl" style="left:40px;top:3px;">        <span class="kw">return</span> a + b;</div>
<div class="abs mono cl ln" style="left:14px;top:18px;">14</div>
<div class="abs mono cl" style="left:40px;top:18px;">    }</div>
<div class="abs mono cl ln" style="left:14px;top:33px;">15</div>
<div class="abs mono cl ln" style="left:14px;top:48px;">16</div>
<div class="abs mono cl" style="left:40px;top:48px;">    <span class="an">@Override</span></div>
<svg class="abs" style="left:28px;top:49px" width="10" height="10" viewBox="0 0 10 10"><circle cx="4.9" cy="5.5" r="4.1" fill="#e6eff8" stroke="#a9c0d8" stroke-width="0.9"/><path d="M2.8 5.5 H7" stroke="#56789c" stroke-width="1"/></svg>
<div class="abs mono cl ln" style="left:14px;top:63px;">17</div>
<div class="abs mono cl" style="left:40px;top:63px;">    <span class="kw">public</span> <span class="kw">int</span> subtract(<span class="kw">int</span> a, <span class="kw">int</span> b) {</div>
<svg class="abs" style="left:3px;top:67px" width="11" height="6" viewBox="0 0 11 6"><path d="M0.9 5.4 L5.5 1 L10.1 5.4 Z" fill="#fff" stroke="#7a22c4" stroke-width="1"/></svg>
<div class="abs mono cl ln" style="left:14px;top:78px;">18</div>
<div class="abs mono cl" style="left:40px;top:78px;">        <span class="kw">return</span> a - b;</div>
<div class="abs mono cl ln" style="left:14px;top:93px;">19</div>
<div class="abs mono cl" style="left:40px;top:93px;">    }</div>
<div class="abs mono cl ln" style="left:14px;top:108px;">20</div>
<div class="abs mono cl ln" style="left:14px;top:123px;">21</div>
<div class="abs mono cl" style="left:40px;top:123px;">    <span class="an">@Override</span></div>
<svg class="abs" style="left:28px;top:124px" width="10" height="10" viewBox="0 0 10 10"><circle cx="4.9" cy="5.5" r="4.1" fill="#e6eff8" stroke="#a9c0d8" stroke-width="0.9"/><path d="M2.8 5.5 H7" stroke="#56789c" stroke-width="1"/></svg>
<div class="abs mono cl ln" style="left:14px;top:138px;">22</div>
<div class="abs mono cl" style="left:40px;top:138px;">    <span class="kw">public</span> <span class="kw">int</span> multiply(<span class="kw">int</span> a, <span class="kw">int</span> b) {</div>
<svg class="abs" style="left:3px;top:142px" width="11" height="6" viewBox="0 0 11 6"><path d="M0.9 5.4 L5.5 1 L10.1 5.4 Z" fill="#fff" stroke="#7a22c4" stroke-width="1"/></svg>
<div class="abs mono cl ln" style="left:14px;top:153px;">23</div>
<div class="abs mono cl" style="left:40px;top:153px;">        <span class="kw">return</span> a * b;</div>
<div class="abs mono cl ln" style="left:14px;top:168px;">24</div>
<div class="abs mono cl" style="left:40px;top:168px;">    }</div>
<div class="abs mono cl ln" style="left:14px;top:183px;">25</div>
<div class="abs mono cl ln" style="left:14px;top:198px;">26</div>
<div class="abs mono cl" style="left:40px;top:198px;">    <span class="an">@Override</span></div>
<svg class="abs" style="left:28px;top:199px" width="10" height="10" viewBox="0 0 10 10"><circle cx="4.9" cy="5.5" r="4.1" fill="#e6eff8" stroke="#a9c0d8" stroke-width="0.9"/><path d="M2.8 5.5 H7" stroke="#56789c" stroke-width="1"/></svg>
<div class="abs mono cl ln" style="left:14px;top:213px;">27</div>
<div class="abs mono cl" style="left:40px;top:213px;">    <span class="kw">public</span> <span class="kw">int</span> division(<span class="kw">int</span> a, <span class="kw">int</span> b) {</div>
<svg class="abs" style="left:3px;top:217px" width="11" height="6" viewBox="0 0 11 6"><path d="M0.9 5.4 L5.5 1 L10.1 5.4 Z" fill="#fff" stroke="#7a22c4" stroke-width="1"/></svg>
<div class="abs mono cl ln" style="left:14px;top:228px;">28</div>
<div class="abs mono cl" style="left:40px;top:228px;">        <span class="kw">return</span> a/b;</div>
<div class="abs mono cl ln" style="left:14px;top:243px;">29</div>
<div class="abs mono cl" style="left:40px;top:243px;">    }</div>
<div class="abs mono cl ln" style="left:14px;top:258px;">30</div>
<svg class="abs" style="left:2px;top:78px" width="13" height="13" viewBox="0 0 13 13"><path d="M5.6 1.6 Q10.4 2 10.6 6 Q10.4 10 5.8 10.4 Q8.6 6 5.6 1.6 Z" fill="#2c5f94" stroke="#1d4a7a" stroke-width="0.8"/><path d="M0 4.3 H3.4 V1.6 L8 6 L3.4 10.4 V7.7 H0 Z" fill="#4a8ccc" stroke="#235a98" stroke-width="0.9" stroke-linejoin="round"/><path d="M0.6 9.4 L1.6 12.4 L3.4 10.4" fill="#1d4a7a"/></svg>
</div>

</div>
<!-- OUTLINE PANEL -->
<div id="outline" class="abs panel" style="left:1080px;top:303px;width:357px;height:293px">
<div class="abs atab" style="left:0;width:88px"></div>
<svg class="abs" style="left:5px;top:7px" width="14" height="15" viewBox="0 0 14 15"><rect x="1.55" y="0.55" width="4.4" height="4.4" fill="#cfe3f8" stroke="#2c7ac4" stroke-width="1.1"/><rect x="1.55" y="9.2" width="4.4" height="4.4" fill="#cfe3f8" stroke="#2c7ac4" stroke-width="1.1"/><rect x="8.9" y="6.4" width="1.8" height="1.8" fill="#fff" stroke="#2c7ac4" stroke-width="0.9"/><path d="M8 3.5 H13 M11.6 7.5 H13 M8 12.5 H13" stroke="#2c7ac4" stroke-width="1"/></svg>
<div class="abs tabtxt" style="left:25px;top:0px;">Outline</div>
<svg class="abs" style="left:69px;top:8px" width="12" height="12" viewBox="0 0 12 12"><path d="M1.2 2.6 L2.6 1.2 L6 4.2 L9.4 1.2 L10.8 2.6 L7.8 6 L10.8 9.4 L9.4 10.8 L6 7.8 L2.6 10.8 L1.2 9.4 L4.2 6 Z" fill="#fff" stroke="#000" stroke-width="1.05" stroke-linejoin="round"/></svg>
<svg class="abs" style="left:130px;top:6px" width="16" height="16" viewBox="0 0 16 16"><circle cx="5" cy="5" r="3.3" fill="#ececec" stroke="#e2e2e2" stroke-width="0.6"/><circle cx="11" cy="6.6" r="3.3" fill="#ececec" stroke="#e2e2e2" stroke-width="0.6"/><circle cx="6" cy="11.4" r="3.4" fill="#dedede" stroke="#d8d8d8" stroke-width="0.6"/></svg>
<svg class="abs" style="left:152px;top:6px" width="16" height="16" viewBox="0 0 16 16"><rect x="2.5" y="1.5" width="10" height="10" fill="#dfeaf8" stroke="#8a9cc0" stroke-width="1"/><rect x="4.5" y="3.5" width="10" height="10" fill="#e8f0fb" stroke="#7a8cb4" stroke-width="1"/><path d="M6.5 8.5 H12.5" stroke="#1d4a9a" stroke-width="1.4"/></svg>
<svg class="abs" style="left:174px;top:5px" width="17" height="17" viewBox="0 0 17 17"><path d="M2.5 2 V13" stroke="#3a5a8a" stroke-width="1.1"/><path d="M0.4 10.6 L2.5 14.4 L4.6 10.6 Z" fill="#3a5a8a"/><text x="5.4" y="7.6" font-family="Liberation Sans, sans-serif" font-weight="bold" font-size="11.5" fill="#0e8a72">a</text><text x="9.2" y="16.6" font-family="Liberation Sans, sans-serif" font-weight="bold" font-size="13.4" fill="#a01e96">z</text></svg>
<svg class="abs" style="left:196px;top:6px" width="16" height="16" viewBox="0 0 16 16"><circle cx="8.5" cy="7" r="5.4" fill="#3a9ce0" stroke="#2a86d0" stroke-width="0.8"/><text x="5.9" y="10.6" font-family="Liberation Sans, sans-serif" font-weight="bold" font-size="8.6" fill="#e8f4ff">F</text><path d="M1 0.4 L15 14.6" stroke="#1a1a8a" stroke-width="1.1"/></svg>
<svg class="abs" style="left:219px;top:5px" width="16" height="16" viewBox="0 0 16 16"><circle cx="6.3" cy="9.7" r="3.5" fill="#a8a8a8" stroke="#909090" stroke-width="0.7"/><path d="M1 4.2 L12 14.4" stroke="#1a1a8a" stroke-width="1.1"/><text x="12.4" y="7.2" transform="scale(0.8,1)" font-family="Liberation Sans, sans-serif" font-weight="bold" font-size="9" fill="#2a5cb0">S</text></svg>
<svg class="abs" style="left:243.5px;top:8.5px" width="9" height="9" viewBox="0 0 10 10"><circle cx="5" cy="5" r="4.2" fill="url(#gDot)" stroke="#1a7a3c" stroke-width="0.8"/></svg>
<svg class="abs" style="left:263px;top:5px" width="16" height="16" viewBox="0 0 16 16"><circle cx="6" cy="9.5" r="3.5" fill="#a8a8a8" stroke="#909090" stroke-width="0.7"/><path d="M1 4 L12 14.6" stroke="#1a1a8a" stroke-width="1.1"/><text x="12.6" y="6.8" transform="scale(0.82,1)" font-family="Liberation Sans, sans-serif" font-weight="bold" font-size="7.8" fill="#2a5cb0">L</text></svg>
<svg class="abs" style="left:291px;top:7px" width="12" height="8" viewBox="0 0 12 8"><path d="M1.8 1.65 L10.2 1.65 L6 5.45 Z" fill="#fff" stroke="#000" stroke-width="1.05" stroke-linejoin="miter"/></svg>
<svg class="abs" style="left:311px;top:7px" width="12" height="6" viewBox="0 0 12 6"><rect x="1.55" y="1.55" width="8.9" height="2.9" fill="#fff" stroke="#000" stroke-width="1.15"/></svg>
<svg class="abs" style="left:333px;top:7px" width="12" height="12" viewBox="0 0 12 12"><rect x="1.55" y="1.55" width="8.9" height="8.9" fill="#fff" stroke="#000" stroke-width="1.15"/><rect x="2.8" y="3" width="6.4" height="1.05" fill="#000"/></svg>
<div class="abs row" style="left:46px;top:28px;">nl.blogspot.javasolutionsguide.service.impl</div>
<svg class="abs" style="left:24px;top:30px" width="13" height="13" viewBox="0 0 14 14"><rect x="1.4" y="1.4" width="11.2" height="11.2" fill="#dfe0a8" stroke="#a9aa78" stroke-width="0.8"/><path d="M7 0 V14 M0 7 H14" stroke="#6e6f44" stroke-width="1.1"/></svg>
<div class="abs row" style="left:46px;top:45px;">CalculatorServiceImpl</div>
<svg class="abs" style="left:11px;top:49px" width="10" height="8" viewBox="0 0 10 8"><path d="M0 0 L9 0 L4.5 7 Z" fill="#8c8c8c"/></svg>
<svg class="abs" style="left:22.59999999999991px;top:44.80000000000001px" width="13.6" height="13.6" viewBox="0 0 14 14"><circle cx="7" cy="7" r="6.4" fill="url(#gRun)" stroke="#0a7a2c" stroke-width="0.8"/><text x="7" y="10.9" text-anchor="middle" font-family="Liberation Sans, sans-serif" font-weight="bold" font-size="11" fill="#fff">C</text></svg>
<div class="abs row" style="left:62px;top:62px;">add(int, int)<span style="color:#8a7e5a"> : int</span></div>
<div class="abs" style="left:3px;top:79px;width:352px;height:16px;background:#dcdcdc"></div>
<div class="abs row" style="left:62px;top:79px;">subtract(int, int) : int</div>
<div class="abs row" style="left:62px;top:96px;">multiply(int, int)<span style="color:#8a7e5a"> : int</span></div>
<div class="abs row" style="left:62px;top:113px;">division(int, int)<span style="color:#8a7e5a"> : int</span></div>
<svg class="abs" style="left:41.5px;top:66.69999999999999px" width="8.8" height="8.8" viewBox="0 0 10 10"><circle cx="5" cy="5" r="4.2" fill="url(#gDot)" stroke="#1a7a3c" stroke-width="0.8"/></svg>
<svg class="abs" style="left:53px;top:70.19999999999999px" width="7" height="5" viewBox="0 0 7 5"><path d="M0.8 4.3 L3.5 1 L6.2 4.3 Z" fill="#fff" stroke="#8628d8" stroke-width="1.05"/></svg>
<svg class="abs" style="left:41.5px;top:83.69999999999999px" width="8.8" height="8.8" viewBox="0 0 10 10"><circle cx="5" cy="5" r="4.2" fill="url(#gDot)" stroke="#1a7a3c" stroke-width="0.8"/></svg>
<svg class="abs" style="left:53px;top:87.19999999999999px" width="7" height="5" viewBox="0 0 7 5"><path d="M0.8 4.3 L3.5 1 L6.2 4.3 Z" fill="#fff" stroke="#8628d8" stroke-width="1.05"/></svg>
<svg class="abs" style="left:41.5px;top:100.69999999999999px" width="8.8" height="8.8" viewBox="0 0 10 10"><circle cx="5" cy="5" r="4.2" fill="url(#gDot)" stroke="#1a7a3c" stroke-width="0.8"/></svg>
<svg class="abs" style="left:53px;top:104.19999999999999px" width="7" height="5" viewBox="0 0 7 5"><path d="M0.8 4.3 L3.5 1 L6.2 4.3 Z" fill="#fff" stroke="#8628d8" stroke-width="1.05"/></svg>
<svg class="abs" style="left:41.5px;top:117.69999999999999px" width="8.8" height="8.8" viewBox="0 0 10 10"><circle cx="5" cy="5" r="4.2" fill="url(#gDot)" stroke="#1a7a3c" stroke-width="0.8"/></svg>
<svg class="abs" style="left:53px;top:121.19999999999999px" width="7" height="5" viewBox="0 0 7 5"><path d="M0.8 4.3 L3.5 1 L6.2 4.3 Z" fill="#fff" stroke="#8628d8" stroke-width="1.05"/></svg>

</div>
<!-- CONSOLE PANEL -->
<div id="console" class="abs panel" style="left:3px;top:600px;width:1434px;height:179px">
<div class="abs atab" style="left:0;width:93px"></div>
<svg class="abs" style="left:6.5px;top:6.5px" width="13.5" height="13.5" viewBox="0 0 15 15"><rect x="1" y="1" width="13" height="10" rx="1.4" fill="#f4f8ff" stroke="#2a5cb0" stroke-width="1.8"/><path d="M4 4.5 H9 M4 6.5 H11" stroke="#4a5aa8" stroke-width="1"/><path d="M6 11.6 H9 V13 H6 Z" fill="#2a5cb0"/><path d="M2.6 13.8 H12.4" stroke="#2a6ac0" stroke-width="1.5"/></svg>
<div class="abs tabtxt" style="left:25px;top:0px;">Console</div>
<svg class="abs" style="left:74px;top:8px" width="12" height="12" viewBox="0 0 12 12"><path d="M1.2 2.6 L2.6 1.2 L6 4.2 L9.4 1.2 L10.8 2.6 L7.8 6 L10.8 9.4 L9.4 10.8 L6 7.8 L2.6 10.8 L1.2 9.4 L4.2 6 Z" fill="#fff" stroke="#000" stroke-width="1.05" stroke-linejoin="round"/></svg>
<svg class="abs" style="left:96px;top:5px" width="16" height="17" viewBox="0 0 16 17"><rect x="4.5" y="3.5" width="10" height="12" fill="#f6efe0" stroke="#e4cfa4" stroke-width="1.2"/><path d="M7 3.6 L8.4 1 H10.8 L12 3.6 Z" fill="#ced6e4"/><path d="M9 7.5 H13 M9 10 H13 M9 12.5 H13" stroke="#c4d0e0" stroke-width="0.9"/><path d="M1.6 9.6 L4.4 12.6 L8.6 6.6" fill="none" stroke="#8fc2ee" stroke-width="1.6"/></svg>
<div class="abs tabtxt gray" style="left:117px;top:0px;">Tasks</div>
<svg class="abs" style="left:1117.4px;top:7.5px" width="12" height="12" viewBox="0 0 12 12"><rect x="1" y="1" width="10" height="10" rx="1.4" fill="#f3001d" stroke="#ee4358" stroke-width="1.1"/></svg>
<svg class="abs" style="left:1138px;top:6px" width="14" height="14" viewBox="0 0 14 14"><path d="M2.8 2.8 L11.2 11.2 M11.2 2.8 L2.8 11.2" stroke="#d8d8d8" stroke-width="4" stroke-linecap="round"/></svg>
<svg class="abs" style="left:1159px;top:5px" width="18" height="16" viewBox="0 0 18 16"><path d="M2.8 2 L9.6 9 M9.6 2 L2.8 9" stroke="#e9e9e9" stroke-width="3.2" stroke-linecap="round"/><path d="M7.6 7.2 L14 13.8 M14 7.2 L7.6 13.8" stroke="#dadada" stroke-width="4" stroke-linecap="round"/></svg>
<div class="abs" style="left:1182px;top:5px;width:1px;height:17px;background:#dcdcdc"></div>
<svg class="abs" style="left:1187px;top:5px" width="16" height="16" viewBox="0 0 16 16"><path d="M1.5 0.5 H8 L11.5 4 V13.5 H1.5 Z" fill="url(#gPage)" stroke="#b4a070" stroke-width="1"/><path d="M3 3.5 H8 M3 5.5 H10 M3 7.5 H10 M3 9.5 H8 M3 11.5 H7" stroke="#3d5ca8" stroke-width="1"/><path d="M9.4 9.4 L14.6 14.6 M14.6 9.4 L9.4 14.6" stroke="#7a7a7a" stroke-width="2.1" stroke-linecap="round"/></svg>
<svg class="abs" style="left:1209px;top:5px" width="16" height="16" viewBox="0 0 16 16"><rect x="1.5" y="1.5" width="13" height="12.6" fill="#d8ecfa" stroke="#a8a07a" stroke-width="1"/><rect x="10.5" y="1.5" width="4" height="12.6" fill="#f0f4fa" stroke="#7a8cb4" stroke-width="1"/><rect x="11.6" y="3.4" width="1.8" height="1.8" fill="#2a4c9a"/><rect x="11.6" y="10.6" width="1.8" height="1.8" fill="#2a4c9a"/><path d="M3 9 V7.4 Q3 5 5 5 Q7 5 7 7.4 V9" fill="none" stroke="#a87a10" stroke-width="1.3"/><rect x="1" y="8.6" width="8" height="6.6" rx="1" fill="#f0b030" stroke="#a87a10" stroke-width="1"/><rect x="4.4" y="10.6" width="1.2" height="2.4" fill="#6a4a08"/></svg>
<svg class="abs" style="left:1231px;top:5px" width="16" height="16" viewBox="0 0 16 16"><path d="M0.5 0.5 H7.5 L10.5 3.5 V13.5 H0.5 Z" fill="url(#gPage)" stroke="#b4a070" stroke-width="1"/><path d="M2 3.5 H7 M2 5.5 H8 M2 7.5 H6 M2 9.5 H5 M2 11.5 H5" stroke="#3d5ca8" stroke-width="1"/><path d="M13.8 2.4 V9.4 H9.6 V7.2 L5.8 10.6 L9.6 14 V11.8 H15.4 V2.4 Z" fill="#fbe7a4" stroke="#c89628" stroke-width="0.9" stroke-linejoin="round"/></svg>
<div class="abs" style="left:1250.5px;top:2px;width:21.5px;height:21px;background:#dcdcdc;border:1px solid #c2c2c2"></div>
<div class="abs" style="left:1272px;top:2px;width:22px;height:21px;background:#dcdcdc;border:1px solid #c2c2c2;border-left:none"></div>
<svg class="abs" style="left:1253px;top:5px" width="16" height="16" viewBox="0 0 16 16"><rect x="5.5" y="1.5" width="10" height="7.4" rx="0.8" fill="#f4f8ff" stroke="#2a6ac8" stroke-width="1.6"/><path d="M8 3.5 H12.4 M8 5.5 H13.4" stroke="#2a3c9a" stroke-width="1"/><rect x="1.5" y="7.5" width="6.6" height="5" fill="#e8f0fc" stroke="#2a6ac8" stroke-width="1.3"/><path d="M4 13 H6 V14.4 H4 Z M2.4 15 H7.6" stroke="#2a6ac8" stroke-width="1.2" fill="#2a6ac8"/></svg>
<svg class="abs" style="left:1275px;top:5px" width="16" height="16" viewBox="0 0 16 16"><rect x="5.5" y="1.5" width="10" height="7.4" rx="0.8" fill="#f4f8ff" stroke="#2a6ac8" stroke-width="1.6"/><path d="M7.4 3.4 L10.6 7 M10.6 3.4 L7.4 7" stroke="#e8102c" stroke-width="1.6"/><path d="M12 3.5 H14 M12 5.5 H14" stroke="#2a3c9a" stroke-width="1"/><rect x="1.5" y="7.5" width="6.6" height="5" fill="#e8f0fc" stroke="#2a6ac8" stroke-width="1.3"/><path d="M4 13 H6 V14.4 H4 Z M2.4 15 H7.6" stroke="#2a6ac8" stroke-width="1.2" fill="#2a6ac8"/></svg>
<div class="abs" style="left:1297px;top:5px;width:1px;height:17px;background:#dcdcdc"></div>
<svg class="abs" style="left:1303px;top:5px" width="16" height="16" viewBox="0 0 16 16"><rect x="1.5" y="5.5" width="11.6" height="9" fill="#fff" stroke="#2a5ca8" stroke-width="1"/><rect x="1.5" y="5.5" width="11.6" height="2.6" fill="#3a78c8"/><path d="M6.4 10.6 L9.6 8" stroke="#555" stroke-width="1"/><path d="M8.6 5.4 L11.4 2 L15.4 3.6 L13.4 7.6 Z" fill="#2aa84a" stroke="#168a38" stroke-width="0.8"/></svg>
<svg class="abs" style="left:1324px;top:5px" width="16" height="16" viewBox="0 0 16 16"><rect x="2" y="1" width="12" height="10" rx="1" fill="#f6f9ff" stroke="#a8c4e8" stroke-width="1.8"/><path d="M5 4.5 H10 M5 6.5 H11.4" stroke="#9aa4c8" stroke-width="1"/><path d="M6.4 11.8 H9.6 V13 H6.4 Z" fill="#a8c4e8"/><path d="M3.4 14 H12.6" stroke="#a8c4e8" stroke-width="1.5"/></svg>
<svg class="abs" style="left:1343px;top:11px" width="7" height="5" viewBox="0 0 7 5"><path d="M0.4 0.6 H6.6 L3.5 4.4 Z" fill="#8a8a8a"/></svg>
<svg class="abs" style="left:1354px;top:5px" width="17" height="16" viewBox="0 0 17 16"><rect x="1.5" y="3.5" width="12" height="11" fill="#fdfbf2" stroke="#8a7a4a" stroke-width="1"/><rect x="1.5" y="3.5" width="12" height="2.4" fill="#3a78c8" stroke="#2a5ca8" stroke-width="0.6"/><path d="M13 0.4 L14 3 L16.6 4 L14 5 L13 7.6 L12 5 L9.4 4 L12 3 Z" fill="#fbe68a" stroke="#c8a030" stroke-width="0.7"/></svg>
<svg class="abs" style="left:1373px;top:11px" width="7" height="5" viewBox="0 0 7 5"><path d="M0.4 0.6 H6.6 L3.5 4.4 Z" fill="#111"/></svg>
<svg class="abs" style="left:1388px;top:7px" width="12" height="6" viewBox="0 0 12 6"><rect x="1.55" y="1.55" width="8.9" height="2.9" fill="#fff" stroke="#000" stroke-width="1.15"/></svg>
<svg class="abs" style="left:1410px;top:7px" width="12" height="12" viewBox="0 0 12 12"><rect x="1.55" y="1.55" width="8.9" height="8.9" fill="#fff" stroke="#000" stroke-width="1.15"/><rect x="2.8" y="3" width="6.4" height="1.05" fill="#000"/></svg>
<div class="abs row" style="left:5px;top:27px;">Tomcat v8.0 Server at localhost [Apache Tomcat] /Library/Java/JavaVirtualMachines/jdk1.8.0_91.jdk/Contents/Home/bin/java (14-May-2017, 12:14:30 pm)</div>
<div class="abs" style="left:3px;top:42px;width:1429px;height:1px;background:#6a6a6a"></div>
<div class="abs" style="left:3px;top:43px;width:1429px;height:133px;overflow:hidden">
<div class="abs mono cl red" style="left:2px;top:1px">WARNING: Unable to find required classes (javax.activation.DataHandler and javax.mail.internet.MimeMultipart). Attachment support is disabled.</div>
<div class="abs mono cl red" style="left:2px;top:16px">May 14, 2017 12:14:36 PM org.apache.jasper.servlet.TldScanner scanJars</div>
<div class="abs mono cl red" style="left:2px;top:31px">INFO: At least one JAR was scanned for TLDs yet contained no TLDs. Enable debug logging for this logger for a complete list of JARs that were scanned but no TLDs were found in them. Skipping unneeded JARs during scanning can improve startup time and JSP compilation time.</div>
<div class="abs mono cl red" style="left:2px;top:46px">May 14, 2017 12:14:36 PM org.apache.coyote.AbstractProtocol start</div>
<div class="abs mono cl red" style="left:2px;top:61px">INFO: Starting ProtocolHandler ["http-nio-8080"]</div>
<div class="abs mono cl red" style="left:2px;top:76px">May 14, 2017 12:14:36 PM org.apache.coyote.AbstractProtocol start</div>
<div class="abs mono cl red" style="left:2px;top:91px">INFO: Starting ProtocolHandler ["ajp-nio-8009"]</div>
<div class="abs mono cl red" style="left:2px;top:106px">May 14, 2017 12:14:36 PM org.apache.catalina.startup.Catalina start</div>
<div class="abs mono cl red" style="left:2px;top:121px">INFO: Server startup in 3112 ms</div>
</div>

</div>
<!-- STATUS BAR -->
<div class="abs" style="left:0px;top:779px;width:1440px;height:30px;background:linear-gradient(#e9e9e9,#d9d9d9)"></div>
<div class="abs" style="left:0px;top:807.4px;width:1440px;height:1.6px;background:linear-gradient(90deg,#3a2a30 0%,#33283a 70%,#1c3050 72%,#1c3050 100%)"></div>
<div class="abs" style="left:857px;top:782px;width:1px;height:22px;background:#9a9a9a"></div>
<div class="abs" style="left:961px;top:782px;width:1px;height:22px;background:#9a9a9a"></div>
<div class="abs" style="left:1059px;top:782px;width:1px;height:22px;background:#9a9a9a"></div>
<div class="abs row" style="left:865px;top:785px;">Writable</div>
<div class="abs row" style="left:969px;top:785px;">Smart Insert</div>
<div class="abs row" style="left:1067px;top:785px;">18 : 1</div>
<div class="abs" style="left:1156px;top:788px;width:1px;height:14px;background:repeating-linear-gradient(#9a9a9a 0 2px,transparent 2px 4px)"></div>
<div class="abs" style="left:336.5px;top:765.5px;width:85px;height:27px;background:#f1f1f1;border:1px solid #c9c9c9;border-radius:6px;box-shadow:0 1px 3px rgba(0,0,0,0.15);font-size:14px;line-height:25px;text-align:center;color:#444;letter-spacing:0.1px">Calendar</div>
<svg class="abs" style="left:370px;top:791px" width="18" height="10"><path d="M0 0 H18 V0.6 L9 9 L0 0.6 Z" fill="#f1f1f1"/><path d="M0.6 0.9 L9 9 L17.4 0.9" fill="none" stroke="#c9c9c9" stroke-width="1"/></svg>

</body>
</html>
